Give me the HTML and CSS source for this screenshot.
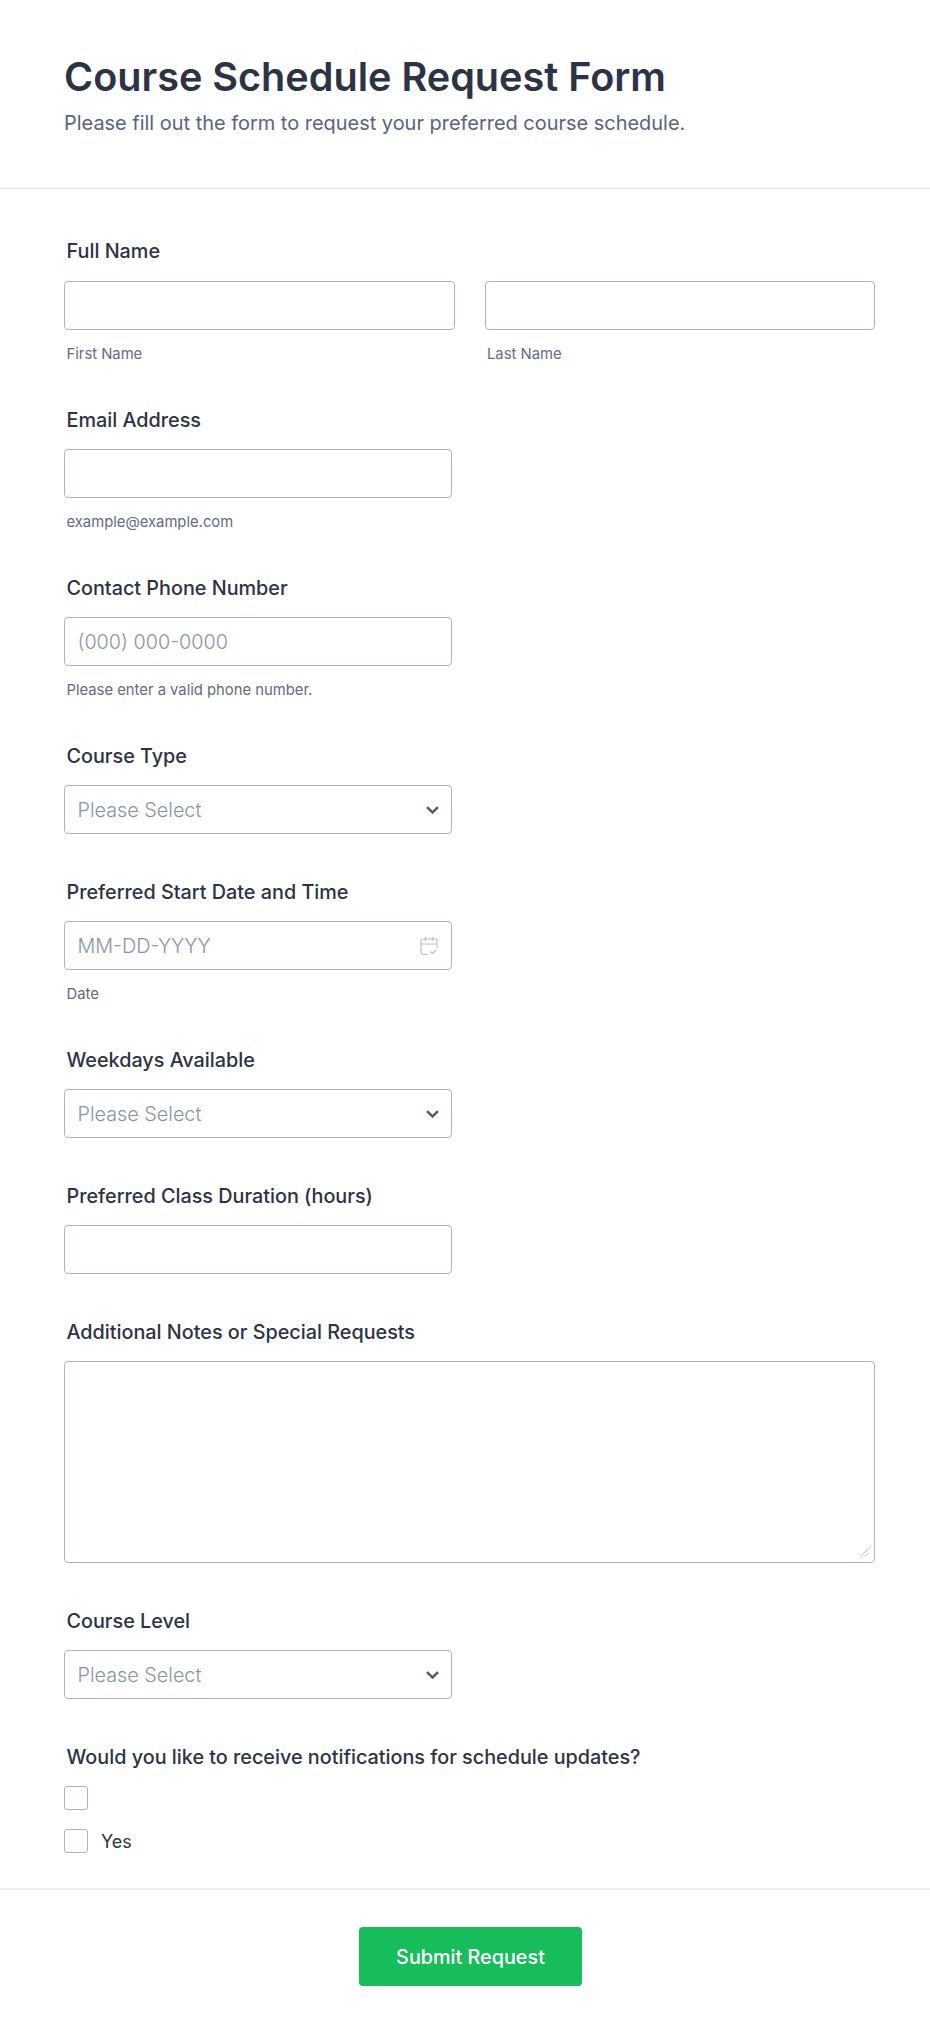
FILE: index.html
```html
<!DOCTYPE html>
<html>
<head>
<title>Course Schedule Request Form</title>
<link rel="stylesheet" href="styles.css">
</head>
<body>

<div class="header">
  <h1>Course Schedule Request Form</h1>
  <p>Please fill out the form to request your preferred course schedule.</p>
</div>

<form class="form">
  <div class="field first">
    <label class="label">Full Name</label>
    <div class="name-row">
      <div class="name-col">
        <input class="input" type="text">
        <div class="sub">First Name</div>
      </div>
      <div class="name-col">
        <input class="input" type="text">
        <div class="sub">Last Name</div>
      </div>
    </div>
  </div>

  <div class="field">
    <label class="label">Email Address</label>
    <input class="input short" type="text">
    <div class="sub">example@example.com</div>
  </div>

  <div class="field">
    <label class="label">Contact Phone Number</label>
    <input class="input short" type="text" placeholder="(000) 000-0000">
    <div class="sub">Please enter a valid phone number.</div>
  </div>

  <div class="field">
    <label class="label">Course Type</label>
    <div class="input short select">
      <span>Please Select</span>
      <svg class="chevron" viewBox="0 0 13 8"><path d="M1 1.200 6.500 6.500 12 1.200"/></svg>
    </div>
  </div>

  <div class="field">
    <label class="label">Preferred Start Date and Time</label>
    <div class="input short select">
      <span>MM-DD-YYYY</span>
      <svg class="calendar" viewBox="0 0 18 20">
        <path d="M8 18.500H3A2 2 0 0 1 1 16.500V5A2 2 0 0 1 3 3H15A2 2 0 0 1 17 5V12"/>
        <path d="M1 8H17M5.500 1V5M12.500 1V5M10.500 15.500l2 2 3.500-3.500"/>
      </svg>
    </div>
    <div class="sub">Date</div>
  </div>

  <div class="field">
    <label class="label">Weekdays Available</label>
    <div class="input short select">
      <span>Please Select</span>
      <svg class="chevron" viewBox="0 0 13 8"><path d="M1 1.200 6.500 6.500 12 1.200"/></svg>
    </div>
  </div>

  <div class="field">
    <label class="label">Preferred Class Duration (hours)</label>
    <input class="input short" type="text">
  </div>

  <div class="field">
    <label class="label">Additional Notes or Special Requests</label>
    <div class="notes-wrap">
      <textarea class="input notes"></textarea>
      <svg class="grip" viewBox="0 0 9 9"><path d="M0.500 8.500 8.500 0.500M5 8.500 8.500 5"/></svg>
    </div>
  </div>

  <div class="field">
    <label class="label">Course Level</label>
    <div class="input short select">
      <span>Please Select</span>
      <svg class="chevron" viewBox="0 0 13 8"><path d="M1 1.200 6.500 6.500 12 1.200"/></svg>
    </div>
  </div>

  <div class="field">
    <label class="label">Would you like to receive notifications for schedule updates?</label>
    <div class="checks">
      <div class="check"><span class="box"></span></div>
      <div class="check"><span class="box"></span><span>Yes</span></div>
    </div>
  </div>
</form>

<div class="footer">
  <button class="submit" type="button">Submit Request</button>
</div>

</body>
</html>
```

FILE: styles.css
```css
* {
  box-sizing: border-box;
}

body {
  margin: 0;
  background: #fff;
  color: #2c3345;
  font-family: Inter, "Liberation Sans", sans-serif;
}

.header {
  height: 189px;
  padding: 52px 64px 0;
  border-bottom: 1px solid #dcdee9;
}

.header h1 {
  margin: 0;
  font-size: 39.600px;
  font-weight: 600;
  line-height: 50px;
}

.header p {
  margin: 6px 0 0;
  font-size: 19.950px;
  line-height: 30px;
  color: #57647e;
}

.form {
  display: flex;
  flex-direction: column;
  gap: 46px;
  padding: 50px 55px 0 64px;
}

.label {
  display: block;
  margin: 0 0 17px 2.500px;
  font-size: 19.800px;
  font-weight: 500;
  line-height: 24px;
}

.first .label {
  margin-bottom: 18px;
}

.name-row {
  display: flex;
  gap: 30px;
}

.name-col {
  flex: 1;
}

.input {
  display: block;
  width: 100%;
  height: 49px;
  padding: 0 12.500px;
  background: #fff;
  border: 1px solid #adb3c6;
  border-radius: 4px;
  font-family: inherit;
  font-size: 19.800px;
  font-weight: 300;
  color: #8894ab;
  outline: none;
}

.input::placeholder {
  color: #8894ab;
  opacity: 1;
}

.short {
  width: 388px;
}

.select {
  display: flex;
  align-items: center;
  justify-content: space-between;
  padding-right: 12px;
}

.chevron {
  width: 13px;
  height: 8px;
  fill: none;
  stroke: #4f5b76;
  stroke-width: 2.500;
}

.calendar {
  width: 18px;
  height: 20px;
  margin-right: 1px;
  fill: none;
  stroke: #b8bdcf;
  stroke-width: 1.200;
}

.notes-wrap {
  position: relative;
}

.notes {
  height: 202px;
  resize: none;
}

.grip {
  position: absolute;
  right: 6px;
  bottom: 6px;
  width: 9px;
  height: 9px;
  fill: none;
  stroke: #b8bdcf;
  stroke-width: 1;
}

.sub {
  margin: 16px 0 0 2.500px;
  font-size: 14.800px;
  line-height: 16px;
  color: #5f6b85;
}

.checks {
  display: flex;
  flex-direction: column;
  gap: 19px;
}

.check {
  display: flex;
  align-items: center;
  gap: 13px;
  font-size: 18px;
  height: 24px;
}

.box {
  width: 24px;
  height: 24px;
  border: 1px solid #adb3c6;
  border-radius: 3px;
}

.footer {
  display: flex;
  justify-content: center;
  margin-top: 35px;
  padding: 37px 55px 50px 66px;
  border-top: 2px solid #eff0f5;
}

.submit {
  width: 223px;
  height: 59px;
  background: #18bd5b;
  border: 0;
  border-radius: 4px;
  color: #fff;
  font-family: inherit;
  font-size: 19.800px;
  font-weight: 500;
}
```
